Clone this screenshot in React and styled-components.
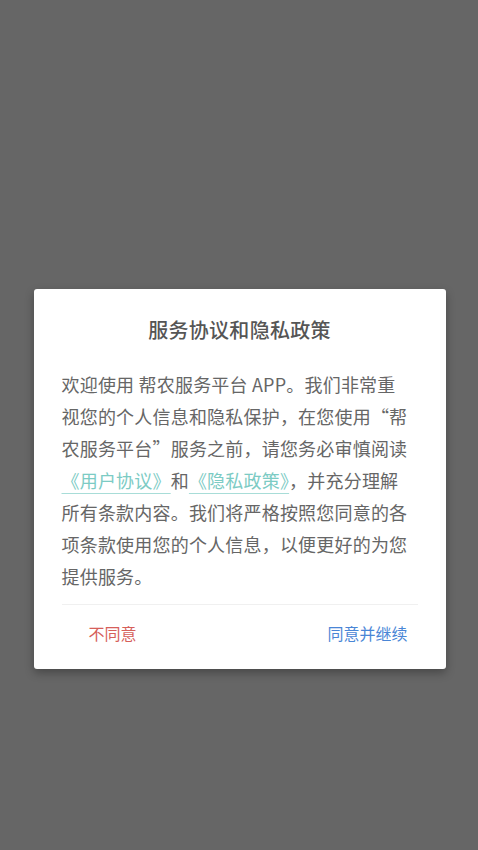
import styled, { createGlobalStyle } from "styled-components"

const GlobalStyle = createGlobalStyle`
  html, body {
    margin: 0;
    padding: 0;
    height: 100%;
    background: #666666;
  }
  #root {
    min-height: 100vh;
  }
  * {
    box-sizing: border-box;
  }
`

// lines as the dialog wraps them on the device
const lines = [
  ["欢迎使用 帮农服务平台 APP。我们非常重"],
  ["视您的个人信息和隐私保护，在您使用“帮"],
  ["农服务平台”服务之前，请您务必审慎阅读"],
  [{ link: "《用户协议》" }, "和", { link: "《隐私政策》" }, "，并充分理解"],
  ["所有条款内容。我们将严格按照您同意的各"],
  ["项条款使用您的个人信息，以便更好的为您"],
  ["提供服务。"],
]

function App() {
  return (
    <>
      <GlobalStyle />
      <Overlay>
        <Dialog>
          <Title>服务协议和隐私政策</Title>
          <Body>
            {lines.map((parts, i) => (
              <Line key={i}>
                {parts.map((p, j) =>
                  typeof p === "string" ? p : <Link key={j} href="#">{p.link}</Link>
                )}
              </Line>
            ))}
          </Body>
          <Footer>
            <Action danger>不同意</Action>
            <Action>同意并继续</Action>
          </Footer>
        </Dialog>
      </Overlay>
    </>
  )
}

const Overlay = styled.div`
  width: 100%;
  min-height: 100vh;
  display: flex;
  align-items: flex-start;
  justify-content: center;
  padding-top: 289px;
  font-family: "Noto Sans CJK SC", "Noto Sans", sans-serif;
`

const Dialog = styled.div`
  width: 412px;
  margin-left: 1px;
  background: #ffffff;
  border-radius: 3px;
  padding: 27px 28px 8px;
  box-shadow: 0 4px 10px rgba(0, 0, 0, 0.3);
`

const Title = styled.h2`
  margin: 0 0 24px;
  font-size: 20px;
  line-height: 28px;
  font-weight: 500;
  color: #555555;
  text-align: center;
  letter-spacing: 0.3px;
`

const Body = styled.div`
  margin: 0;
  font-size: 18px;
  line-height: 32px;
  letter-spacing: 0.2px;
  color: #666666;
  padding-bottom: 12px;
  border-bottom: 1px solid #f0f0f0;
`

const Line = styled.p`
  margin: 0;
  white-space: nowrap;
`

const Link = styled.a`
  color: #7ccbc4;
  text-decoration: underline;
  text-decoration-color: #a8ddd8;
  text-underline-offset: 5px;
`

const Footer = styled.div`
  display: flex;
  justify-content: space-between;
  align-items: center;
  height: 56px;
  padding: 0 10px 0 27px;
`

const Action = styled.button`
  border: none;
  background: none;
  padding: 0;
  font-family: inherit;
  font-size: 16px;
  line-height: 24px;
  color: ${props => props.danger ? "#d6605a" : "#4a86d6"};
  cursor: pointer;
`

export default App
